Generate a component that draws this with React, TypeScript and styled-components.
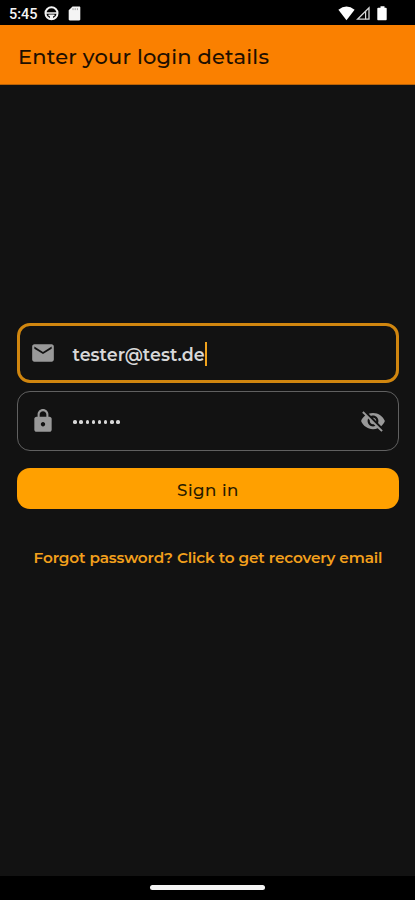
import React from 'react';
import styled, { createGlobalStyle } from 'styled-components';

const GlobalStyle = createGlobalStyle`
  * { box-sizing: border-box; }
  body { margin: 0; background: #121212; }
`;

const Screen = styled.div`
  width: 415px;
  height: 900px;
  display: flex;
  flex-direction: column;
  overflow: hidden;
  background: #121212;
  font-family: Montserrat, Inter, sans-serif;
`;

const StatusBar = styled.div`
  height: 25px;
  flex: none;
  display: flex;
  align-items: center;
  justify-content: space-between;
  padding: 2px 27px 0 9px;
  background: #000;
  color: #f4f4f4;
`;

const StatusGroup = styled.div<{ $gap: number }>`
  display: flex;
  align-items: center;
  gap: ${(p) => p.$gap}px;
  svg { display: block; }
`;

const Clock = styled.span`
  width: 29px;
  font: 500 14.5px/20px Roboto, sans-serif;
  white-space: nowrap;
  margin: 2px -3px 0 0;
`;

const Header = styled.header`
  height: 60px;
  flex: none;
  display: flex;
  align-items: center;
  padding: 5px 18px 0;
  background: #fa8000;
  border-bottom: 1px solid #b86208;
`;

const Title = styled.h1`
  margin: 0;
  font-size: 21px;
  font-weight: 500;
  line-height: 28px;
  letter-spacing: 0.18px;
  color: #1e0f00;
  white-space: nowrap;
`;

const Form = styled.main`
  flex: 1;
  display: flex;
  flex-direction: column;
  padding: 238px 16px 0 17px;
`;

const Field = styled.div<{ $active?: boolean }>`
  height: 60px;
  flex: none;
  display: flex;
  align-items: center;
  border-radius: 13px;
  border: ${(p) => (p.$active ? '3px solid #d0860f' : '1px solid #606060')};
  padding: 0 ${(p) => (p.$active ? 10 : 12)}px;
  & + & { margin-top: 8px; }
  svg { flex: none; display: block; }
`;

const Value = styled.span`
  margin: 3px 0 0 16.5px;
  font-size: 17.5px;
  font-weight: 600;
  line-height: 24px;
  letter-spacing: 0.03px;
  color: #d8d8d8;
  white-space: nowrap;
`;

const Caret = styled.span`
  width: 2px;
  height: 24px;
  margin-top: 1px;
  background: #f0a21c;
`;

const Dots = styled.div`
  flex: 1;
  display: flex;
  gap: 2.4px;
  margin: 2px 0 0 17.4px;
`;

const Dot = styled.i`
  width: 3.7px;
  height: 3.7px;
  border-radius: 50%;
  background: #d8d8d8;
`;

const SignIn = styled.button`
  height: 41px;
  flex: none;
  margin-top: 17px;
  padding: 2px 0 0;
  border: 0;
  border-radius: 13px;
  background: #ffa000;
  color: #291b00;
  font: 500 16.7px/24px Montserrat, Inter, sans-serif;
  letter-spacing: 0.5px;
`;

const Recovery = styled.a`
  margin-top: 38px;
  text-align: center;
  font-size: 15.3px;
  font-weight: 650;
  line-height: 22px;
  letter-spacing: -0.14px;
  color: #f3a01c;
  white-space: nowrap;
`;

const NavBar = styled.footer`
  height: 24px;
  flex: none;
  display: flex;
  justify-content: center;
  padding-top: 9px;
  background: #000;
`;

const Handle = styled.div`
  width: 115px;
  height: 5px;
  border-radius: 3px;
  background: #f5f5f5;
`;

const Icon = ({ d, size = 26, fill = '#999' }: { d: string; size?: number; fill?: string }) => (
  <svg width={size} height={size} viewBox="0 0 24 24" fill={fill}>
    <path d={d} />
  </svg>
);

const MAIL =
  'M20 4H4c-1.1 0-1.99.9-1.99 2L2 18c0 1.1.9 2 2 2h16c1.1 0 2-.9 2-2V6c0-1.1-.9-2-2-2zm0 4l-8 5-8-5V6l8 5 8-5v2z';
const LOCK =
  'M18 8h-1V6c0-2.76-2.24-5-5-5S7 3.24 7 6v2H6c-1.1 0-2 .9-2 2v10c0 1.1.9 2 2 2h12c1.1 0 2-.9 2-2V10c0-1.1-.9-2-2-2zm-6 9c-1.1 0-2-.9-2-2s.9-2 2-2 2 .9 2 2-.9 2-2 2zm3.1-9H8.9V6c0-1.71 1.39-3.1 3.1-3.1s3.1 1.39 3.1 3.1v2z';
const EYE_OFF =
  'M12 7c2.76 0 5 2.24 5 5 0 .65-.13 1.26-.36 1.83l2.92 2.92c1.51-1.26 2.7-2.89 3.43-4.75-1.73-4.39-6-7.5-11-7.5-1.4 0-2.74.25-3.98.7l2.16 2.16C10.74 7.13 11.35 7 12 7zM2 4.27l2.28 2.28.46.46C3.08 8.3 1.78 10.02 1 12c1.73 4.39 6 7.5 11 7.5 1.55 0 3.03-.3 4.38-.84l.42.42L19.73 22 21 20.73 3.27 3 2 4.27zM7.53 9.8l1.55 1.55c-.05.21-.08.43-.08.65 0 1.66 1.34 3 3 3 .22 0 .44-.03.65-.08l1.55 1.55c-.67.33-1.41.53-2.2.53-2.76 0-5-2.24-5-5 0-.79.2-1.53.53-2.2zm4.31-.78l3.15 3.15.02-.16c0-1.66-1.34-3-3-3l-.17.01z';

export default function App() {
  return (
    <>
      <GlobalStyle />
      <Screen>
        <StatusBar>
          <StatusGroup $gap={9}>
            <Clock>5:45</Clock>
            <svg width="15" height="15" viewBox="0 0 15 15" fill="none" stroke="#f4f4f4">
              <circle cx="7.5" cy="7.3" r="6" strokeWidth="2" />
              <path d="M2 7h11M4.5 9.3h6" strokeWidth="1.7" />
              <path d="M7.5 9v5" strokeWidth="3" />
            </svg>
            <svg width="13" height="15" viewBox="0 0 13 15">
              <path d="M4.5.5h6.7c.7 0 1.1.4 1.1 1.1v11.7c0 .7-.4 1.1-1.1 1.1H1.8c-.7 0-1.1-.4-1.1-1.1v-9z" fill="#f4f4f4" />
              <path d="M5 2.2v1.9M7.2 2.2v1.9M9.4 2.2v1.9" stroke="#888" strokeWidth=".8" />
            </svg>
          </StatusGroup>
          <StatusGroup $gap={1}>
            <svg width="17" height="15" viewBox="0 0 17 15" fill="#fff">
              <path d="M.4 3.8Q8.5-2.7 16.6 3.8L8.5 14.2z" />
            </svg>
            <svg width="15" height="15" viewBox="0 0 15 15">
              <path d="M1.5 13.2L13 1.8v11.4z" fill="none" stroke="#d8d8d8" strokeWidth="1.3" />
              <path d="M9.6 5.2v8" stroke="#d8d8d8" strokeWidth="1.2" />
            </svg>
            <svg width="16" height="15" viewBox="0 0 16 15" fill="#fff">
              <path d="M8.5.2h4v1.5h1.3c.6 0 .9.4.9.9v10.6c0 .6-.4 1-.9 1H6.3c-.6 0-1-.4-1-1V2.6c0-.5.4-.9 1-.9h2.2z" />
            </svg>
          </StatusGroup>
        </StatusBar>
        <Header>
          <Title>Enter your login details</Title>
        </Header>
        <Form>
          <Field $active>
            <Icon d={MAIL} />
            <Value>tester@test.de</Value>
            <Caret />
          </Field>
          <Field>
            <Icon d={LOCK} />
            <Dots>
              {Array.from({ length: 8 }, (_, i) => (
                <Dot key={i} />
              ))}
            </Dots>
            <Icon d={EYE_OFF} />
          </Field>
          <SignIn>Sign in</SignIn>
          <Recovery>Forgot password? Click to get recovery email</Recovery>
        </Form>
        <NavBar>
          <Handle />
        </NavBar>
      </Screen>
    </>
  );
}
